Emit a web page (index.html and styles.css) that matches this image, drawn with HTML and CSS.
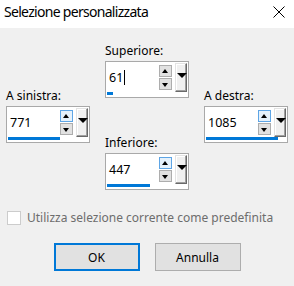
FILE: index.html
```html
<!DOCTYPE html>
<html lang="it">
<head>
    <meta charset="UTF-8">
    <meta name="viewport" content="width=device-width, initial-scale=1.0">
    <title>Selezione personalizzata</title>
    <link rel="stylesheet" href="styles.css">
</head>
<body>
    <div id="title-bar">
        <div id="title">Selezione personalizzata</div>
        <svg class="close" width="12" height="12" viewBox="0 0 12 12">
            <path d="M0.5 0.5 L11.5 11.5 M11.5 0.5 L0.5 11.5" stroke="#000" stroke-width="1" fill="none"/>
        </svg>
    </div>

    <div id="dialog">
        <div class="spins">
            <div class="col side">
                <div class="group">
                    <div class="label">A sinistra:</div>
                    <div class="spin">
                        <div class="field">771</div>
                        <div class="arrows">
                            <span class="arrow up hot"></span>
                            <span class="arrow down"></span>
                        </div>
                        <div class="drop"></div>
                        <div class="bar" style="width: 52px"></div>
                    </div>
                </div>
            </div>

            <div class="col mid">
                <div class="group">
                    <div class="label">Superiore:</div>
                    <div class="spin">
                        <div class="field">61<span class="caret"></span></div>
                        <div class="arrows">
                            <span class="arrow up"></span>
                            <span class="arrow down"></span>
                        </div>
                        <div class="drop"></div>
                        <div class="bar" style="width: 6px"></div>
                    </div>
                </div>
                <div class="group">
                    <div class="label">Inferiore:</div>
                    <div class="spin">
                        <div class="field">447</div>
                        <div class="arrows">
                            <span class="arrow up hot"></span>
                            <span class="arrow down"></span>
                        </div>
                        <div class="drop"></div>
                        <div class="bar" style="width: 43px"></div>
                    </div>
                </div>
            </div>

            <div class="col side">
                <div class="group">
                    <div class="label">A destra:</div>
                    <div class="spin">
                        <div class="field">1085</div>
                        <div class="arrows">
                            <span class="arrow up hot"></span>
                            <span class="arrow down"></span>
                        </div>
                        <div class="drop"></div>
                        <div class="bar" style="width: 72px"></div>
                    </div>
                </div>
            </div>
        </div>

        <label class="check">
            <span class="box"></span>
            <span>Utilizza selezione corrente come predefinita</span>
        </label>

        <div class="buttons">
            <button class="btn default">OK</button>
            <button class="btn">Annulla</button>
        </div>
    </div>
</body>
</html>
```

FILE: styles.css
```css
/* Basic Reset */
* { margin: 0; padding: 0; box-sizing: border-box; font-family: "Noto Sans", "Open Sans", Arial, sans-serif; }
body { width: 294px; height: 286px; background-color: #f0f0f0; color: #000; font-size: 12px; overflow: hidden; }

/* Title Bar */
#title-bar { display: flex; justify-content: space-between; align-items: flex-start; height: 28px; background-color: #fff; padding: 0 9px 0 4px; }
#title { font-size: 14px; letter-spacing: -0.7px; line-height: 15px; padding-top: 4px; }
.close { margin-top: 6px; }

/* Dialog */
#dialog { padding: 15px 0 0 6px; }
.spins { display: flex; gap: 15px; }
.col { display: flex; flex-direction: column; }
.side { padding-top: 45px; }
.mid { gap: 37px; }

.label { line-height: 15px; margin-bottom: 3px; }

/* Spin box */
.spin {
    display: grid;
    grid-template-columns: 52px 13px 14px;
    grid-template-rows: 29px 3px;
    column-gap: 1px;
    width: 84px;
    height: 37px;
    padding-top: 1px;
    background-color: #fff;
    border: 1px solid #a9a9a9;
}
.field { padding-left: 3px; line-height: 29px; font-size: 12.5px; }
.caret { display: inline-block; width: 1px; height: 15px; background-color: #000; vertical-align: -3px; margin-left: 1px; }

.arrows { display: flex; flex-direction: column; gap: 1px; padding-top: 2px; }
.arrow { position: relative; height: 12px; background-color: #e1e1e1; border: 1px solid #adadad; }
.arrow.hot { background-color: #e5f1fb; border-color: #5ea5e5; }
.arrow:after { content: ""; position: absolute; left: 2px; border-left: 3.5px solid transparent; border-right: 3.5px solid transparent; }
.arrow.up:after { top: 3px; border-bottom: 4px solid #000; }
.arrow.down:after { top: 4px; border-top: 4px solid #000; }

.drop {
    position: relative;
    margin-left: 2px;
    background-color: #f0f0f0;
    border-left: 1px solid #e3e3e3;
    border-top: 1px solid #e3e3e3;
    border-right: 1px solid #696969;
    border-bottom: 1px solid #696969;
    box-shadow: inset -1px -1px 0 #a0a0a0, inset 1px 1px 0 #fff;
}
.drop:after { content: ""; position: absolute; top: 9px; left: 1px; border-left: 5px solid transparent; border-right: 5px solid transparent; border-top: 5px solid #000; }

.bar { grid-column: 1 / 4; grid-row: 2; margin-left: 1px; background-color: #0078d7; }

/* Checkbox */
.check { display: flex; align-items: center; gap: 6px; margin-top: 20px; margin-left: 1px; color: #6d6d6d; line-height: 15px; }
.check .box { width: 14px; height: 14px; background-color: #fff; border: 1px solid #cccccc; }

/* Buttons */
.buttons { display: flex; justify-content: center; gap: 15px; margin: 18px 0 0 -6px; }
.btn { width: 86px; height: 28px; font-size: 12px; background-color: #e1e1e1; border: 1px solid #adadad; color: #000; }
.btn.default { border: 2px solid #0078d7; }
```
